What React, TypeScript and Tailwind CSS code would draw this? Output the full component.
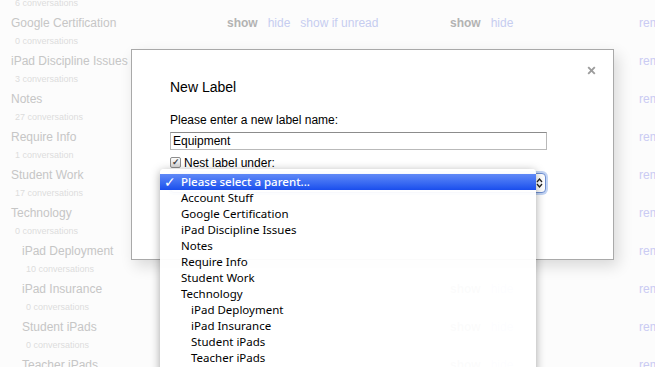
import React from 'react';

type Row = { name: string; count: string; child?: boolean };

const rows: Row[] = [
    { name: 'Account Stuff', count: '6 conversations' },
    { name: 'Google Certification', count: '0 conversations' },
    { name: 'iPad Discipline Issues', count: '3 conversations' },
    { name: 'Notes', count: '27 conversations' },
    { name: 'Require Info', count: '1 conversation' },
    { name: 'Student Work', count: '17 conversations' },
    { name: 'Technology', count: '0 conversations' },
    { name: 'iPad Deployment', count: '10 conversations', child: true },
    { name: 'iPad Insurance', count: '0 conversations', child: true },
    { name: 'Student iPads', count: '0 conversations', child: true },
    { name: 'Teacher iPads', count: '0 conversations', child: true },
];

export default function App() {
    return (
        <div className="relative w-[655px] h-[367px] overflow-hidden bg-[#fcfcfc] font-['Liberation_Sans',Arial,sans-serif]">
            {/* Faded label settings list behind the dialog */}
            <div className="-mt-[23px] flex flex-col">
                {rows.map((r, i) => (
                    <div key={r.name} className="flex h-[38px] shrink-0 text-[12px] leading-[16px]">
                        <div className={`w-[227px] shrink-0 ${r.child ? 'pl-[22px]' : 'pl-[11px]'}`}>
                            <div className="text-[#c6c6c6] whitespace-nowrap">{r.name}</div>
                            <div className="mt-[4px] pl-[4px] text-[9px] leading-[12px] text-[#dcdcdc] whitespace-nowrap">{r.count}</div>
                        </div>
                        <div className="w-[223px] shrink-0 flex gap-[10px]">
                            {i === 1 && (
                                <>
                                    <span className="font-bold text-[#b3b3b3]">show</span>
                                    <span className="text-[#c6cdf0]">hide</span>
                                    <span className="text-[#c6cdf0]">show if unread</span>
                                </>
                            )}
                        </div>
                        <div className="w-[189px] shrink-0 flex gap-[10px]">
                            <span className="font-bold text-[#b3b3b3]">show</span>
                            <span className="text-[#c6cdf0]">hide</span>
                        </div>
                        <div className="text-[#cacbf3] whitespace-nowrap">remove</div>
                    </div>
                ))}
            </div>

            {/* New Label dialog */}
            <div className="absolute left-[131px] top-[49px] w-[483px] h-[211px] bg-white border border-[#a9a9a9] shadow-[4px_6px_14px_rgba(0,0,0,0.14)] pl-[38px] pt-[28px] text-[#222]">
                <svg className="absolute right-[17px] top-[16px] w-[9px] h-[9px]" viewBox="0 0 9 9">
                    <path d="M1.2 1.2 L7.8 7.8 M7.8 1.2 L1.2 7.8" stroke="#9c9c9c" strokeWidth="1.9" />
                </svg>
                <div className="text-[14px] leading-[18px] text-black">New Label</div>
                <div className="mt-[17px] text-[12px] leading-[15px] text-black">Please enter a new label name:</div>
                <div className="mt-[4px] w-[377px] h-[18px] border border-[#b9b9b9] border-t-[#8c8c8c] px-[2px] text-[12px] leading-[16px] text-black">
                    Equipment
                </div>
                <div className="mt-[5px] flex items-center gap-[3px] h-[15px] text-[12px] text-black">
                    <div className="w-[11px] h-[11px] rounded-[2px] border border-[#8d8d8d] bg-gradient-to-b from-[#fdfdfd] to-[#d6d6d6] flex items-center justify-center text-[9px] leading-none text-[#444] font-bold">
                        ✓
                    </div>
                    <span>Nest label under:</span>
                </div>
                <div className="mt-[3px] w-[376px] h-[20px] rounded-[4px] border border-[#6e8fd2] shadow-[0_0_0_2px_rgba(120,160,230,0.45)] bg-white flex justify-end items-center pr-[2px]">
                    <svg className="w-[7px] h-[12px]" viewBox="0 0 7 12">
                        <path d="M1 5 L3.5 2 L6 5 M1 7 L3.5 10 L6 7" stroke="#222" strokeWidth="1.3" fill="none" />
                    </svg>
                </div>
            </div>

            {/* Native popup menu */}
            <div className="absolute left-[160px] top-[169px] w-[376px] h-[210px] rounded-t-[4px] bg-white/95 shadow-[0_2px_10px_rgba(0,0,0,0.35)] pt-[5px] font-['Noto_Sans','DejaVu_Sans',sans-serif] text-[11.5px] text-black">
                <div className="flex items-center h-[16px] bg-gradient-to-b from-[#6089f7] to-[#1a4ded] text-white">
                    <span className="w-[21px] pl-[4px] font-bold text-[14px] leading-none">✓</span>
                    <span className="font-medium">Please select a parent...</span>
                </div>
                {rows.map((p) => (
                    <div key={p.name} className={`h-[16px] leading-[15px] whitespace-nowrap ${p.child ? 'pl-[31px]' : 'pl-[21px]'}`}>
                        {p.name}
                    </div>
                ))}
            </div>
        </div>
    );
}
